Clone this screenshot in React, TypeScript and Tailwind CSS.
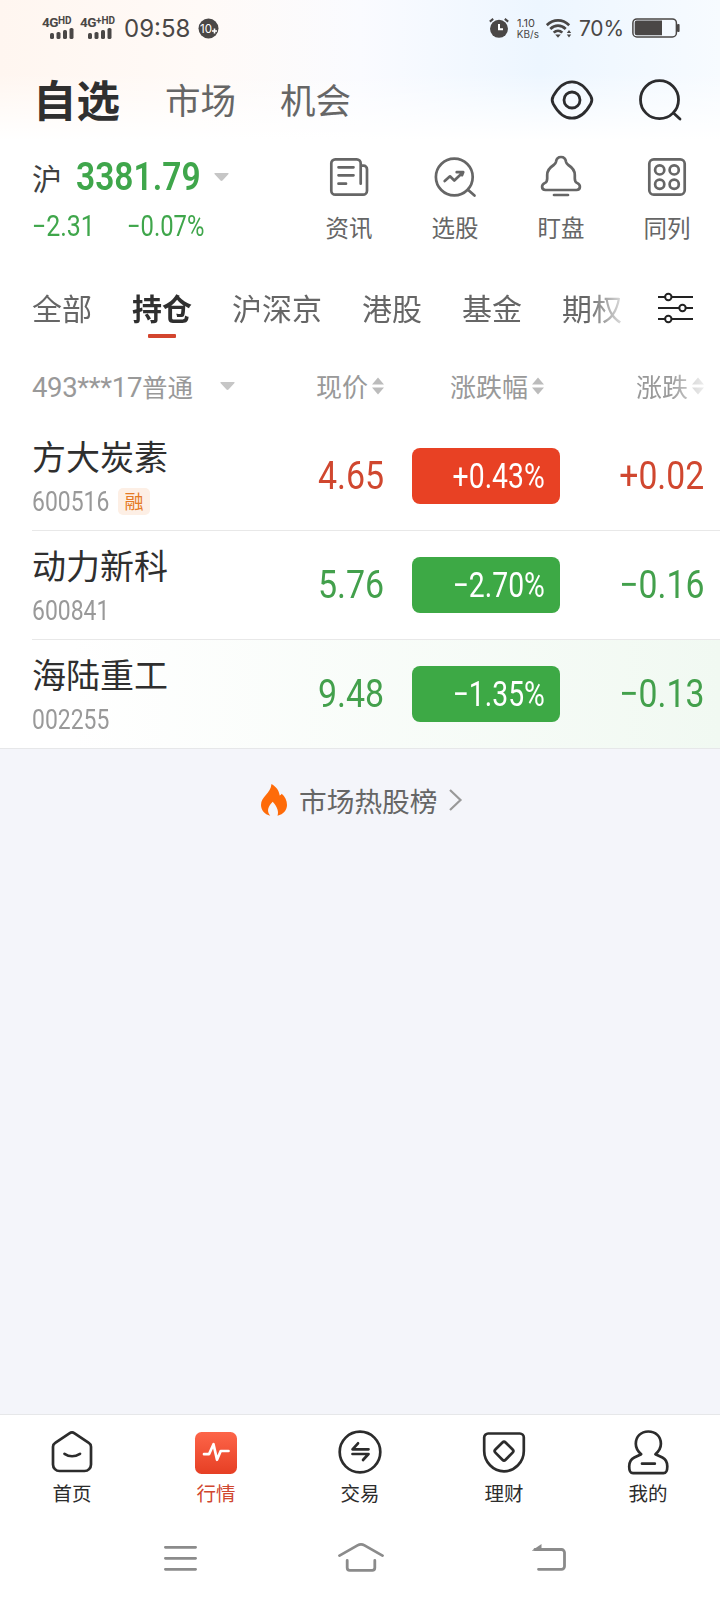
import type { ReactNode } from "react";
import clsx from "clsx";

type Trend = "up" | "down";

interface Stock {
  name: string;
  code: string;
  margin?: boolean;
  price: string;
  percent: string;
  change: string;
  trend: Trend;
}

const stocks: Stock[] = [
  { name: "方大炭素", code: "600516", margin: true, price: "4.65", percent: "+0.43%", change: "+0.02", trend: "up" },
  { name: "动力新科", code: "600841", price: "5.76", percent: "−2.70%", change: "−0.16", trend: "down" },
  { name: "海陆重工", code: "002255", price: "9.48", percent: "−1.35%", change: "−0.13", trend: "down" },
];

const groups = ["全部", "持仓", "沪深京", "港股", "基金", "期权"];

interface IconProps {
  size: number;
  stroke?: number;
  children: ReactNode;
}

function Icon({ size, stroke = 2.4, children }: IconProps) {
  return (
    <svg
      width={size}
      height={size}
      viewBox={`0 0 ${size} ${size}`}
      fill="none"
      stroke="currentColor"
      strokeWidth={stroke}
      strokeLinecap="round"
      strokeLinejoin="round"
      className="shrink-0 overflow-visible"
    >
      {children}
    </svg>
  );
}

// Condensed figures used for every quote
function Num({ className, children }: { className?: string; children: ReactNode }) {
  return (
    <span className={clsx("inline-block whitespace-nowrap font-['Roboto',sans-serif] leading-none", className)}>
      {children}
    </span>
  );
}

function Signal({ label, sup }: { label: string; sup: string }) {
  return (
    <div className="flex flex-col font-['Roboto',sans-serif] font-bold leading-none">
      <div className="flex h-[11px] items-start whitespace-nowrap text-[13.5px] leading-[11px] tracking-[-0.5px]">
        {label}
        <span className="text-[10px] leading-[8px] tracking-[0px]">{sup}</span>
      </div>
      <svg width="24" height="11" viewBox="0 0 24 11" fill="currentColor" className="ml-2">
        <rect x="0" y="5" width="4" height="6" rx="1.6" />
        <rect x="6.5" y="4" width="4" height="7" rx="1.6" />
        <rect x="13" y="2" width="4" height="9" rx="1.6" />
        <rect x="19.5" y="0" width="4" height="11" rx="1.6" />
      </svg>
    </div>
  );
}

function StatusBar() {
  return (
    <div className="flex h-14 items-center justify-between pl-[42px] pr-10 font-['Inter',sans-serif] text-[#4a4746]">
      <div className="flex items-center">
        <div className="w-[38px]"><Signal label="4G" sup="HD" /></div>
        <div className="w-[44px]"><Signal label="4G" sup="+HD" /></div>
        <span className="w-[74px] pt-[1px] text-[24px] leading-none">09:58</span>
        <svg width="21" height="21" viewBox="0 0 21 21">
          <circle cx="10.5" cy="10.5" r="10" fill="#4a4746" />
          <text x="8" y="14.5" fill="#fff" fontSize="11.5" textAnchor="middle" fontFamily="Inter">10</text>
          <path d="M16.500 10.500v5M14 13h5" stroke="#fff" strokeWidth="1.6" />
        </svg>
      </div>
      <div className="flex items-center">
        <svg width="20" height="20" viewBox="0 0 20 20" fill="none" stroke="currentColor" strokeWidth="2">
          <circle cx="10" cy="10.8" r="9" fill="currentColor" stroke="none" />
          <path d="M.8 3.6 4.2.9M19.2 3.6 15.8.9" />
          <path d="M10 6v5.2h4" stroke="#fff" />
        </svg>
        <div className="ml-[2px] flex w-[28px] flex-col items-end gap-[1px] text-[10px] leading-[10px]">
          <div className="pr-[4px] text-[11px]">1.10</div>
          <div>KB/s</div>
        </div>
        <svg width="26" height="19" viewBox="0 0 26 19" fill="none" stroke="currentColor" strokeWidth="2.7" className="ml-[7px]">
          <path d="M.8 6.2C7.5-.2 16.500-.2 23.200 6.200M4.300 10c4.500-4.500 10.900-4.500 15.400 0" />
          <path d="M7.700 13.600c2.600-2.500 6-2.500 8.600 0" />
          <path d="M9.200 15.600h5.600L12 18.700z" fill="currentColor" stroke="none" />
          <path d="m23 11 2.200 3h-4.400zM23 18.600l2.200-3h-4.400z" fill="currentColor" stroke="none" />
        </svg>
        <span className="ml-[7px] w-[53px] pt-[1px] text-[21px] leading-none tracking-[-0.2px]">70%</span>
        <svg width="48" height="20" viewBox="0 0 48 20" fill="none">
          <rect x=".9" y=".9" width="43.500" height="18" rx="4" stroke="currentColor" strokeWidth="1.500" />
          <path d="M2.700 4.500a2 2 0 0 1 2-2H30v14.800H4.700a2 2 0 0 1-2-2z" fill="currentColor" />
          <rect x="45" y="6" width="2.600" height="8" rx="1" fill="currentColor" />
        </svg>
      </div>
    </div>
  );
}

function TitleBar() {
  return (
    <div className="flex h-[90px] items-center pb-1 pl-[33px] pr-[38px] text-[35.500px] leading-none text-[#666]">
      <span className="w-[132px] text-[43.500px] font-bold text-[#2f2f2f]">自选</span>
      <span className="w-[115px]">市场</span>
      <span>机会</span>
      <div className="ml-auto flex gap-[44px] pt-[2px] text-[#2c2c2e]">
        <Icon size={44} stroke={2.800}>
          <path d="M3.200 18.200C8.200 9 14.500 3.800 22 3.800s13.800 5.200 18.800 14.400c1.600 2.900 1.600 4.700 0 7.600C35.800 35 29.500 40.200 22 40.200S8.200 35 3.200 25.800c-1.600-2.900-1.600-4.700 0-7.600Z" />
          <circle cx="22" cy="22" r="8" />
        </Icon>
        <Icon size={44} stroke={2.800}>
          <circle cx="21.500" cy="21.700" r="19" />
          <path d="m35.500 35 6.500 6" />
        </Icon>
      </div>
    </div>
  );
}

function Caret() {
  return (
    <svg width="15" height="9" viewBox="0 0 15 9" fill="#c6c6c6">
      <path d="M1.200 0h12.600c.9 0 1 .7.500 1.200L8.500 7.600c-.600.600-1.400.600-2 0L.700 1.200C.200.700.300 0 1.200 0Z" />
    </svg>
  );
}

const shortcuts: { label: string; icon: ReactNode }[] = [
  {
    label: "资讯",
    icon: (
      <>
        <path d="M31.700 26.700V6.300a4 4 0 0 0-4-4H6.300a4 4 0 0 0-4 4v27.400a4 4 0 0 0 4 4H34a4 4 0 0 0 4-4V12.200a3.500 3.500 0 0 0-3.500-3.500h-2.300" />
        <path d="M9.500 10.300h15M9.500 18.300h15M9.500 26.700H17" />
      </>
    ),
  },
  {
    label: "选股",
    icon: (
      <>
        <circle cx="19.300" cy="20" r="18.400" />
        <path d="m33.200 33 6.300 5.500M9.700 24l5.300-4.700 4.300 4.200 8.200-7.800M21.700 15.200h6.500l-1.200 3" />
      </>
    ),
  },
  {
    label: "盯盘",
    icon: (
      <>
        <path d="M15 4.800C15.500 1.500 17.400 0 20 0s4.500 1.500 5 4.800c.300 1.600 1 2.400 2.300 3.200 4 2.500 6.500 5.500 6.500 10v3.500c0 2.500.700 3.600 2.200 4.400 2.300 1.100 3 2.300 2.900 4-.1 2-1.400 3.100-3.400 3.100h-31c-2 0-3.300-1.100-3.400-3.100-.1-1.700.6-2.900 2.900-4 1.500-.8 2.200-1.900 2.200-4.400V18c0-4.500 2.500-7.500 6.500-10 1.300-.8 2-1.600 2.300-3.200Z" />
        <path d="M13 38h14" />
      </>
    ),
  },
  {
    label: "同列",
    icon: (
      <>
        <rect x="2.300" y="2.300" width="35.400" height="35.400" rx="4.500" />
        <circle cx="12.700" cy="12.900" r="4.600" />
        <circle cx="27.200" cy="12.900" r="4.600" />
        <circle cx="12.700" cy="27.200" r="4.600" />
        <circle cx="27.200" cy="27.200" r="4.600" />
      </>
    ),
  },
];

function IndexPanel() {
  return (
    <section className="flex h-[116px] justify-between pl-8">
      <div className="pt-[12px] text-[#3fa64b]">
        <div className="flex h-[38px] items-center">
          <span className="w-[44px] text-[30px] leading-none text-[#404040]">沪</span>
          <div className="w-[138px]">
            <Num className="origin-left scale-x-[0.85] text-[39.500px] font-semibold">3381.79</Num>
          </div>
          <Caret />
        </div>
        <div className="flex pt-[16px]">
          <div className="w-[95px]"><Num className="origin-left scale-x-[0.86] text-[29px]">−2.31</Num></div>
          <Num className="origin-left scale-x-[0.82] text-[29px]">−0.07%</Num>
        </div>
      </div>
      <div className="flex text-[#666]">
        {shortcuts.map(({ label, icon }) => (
          <div key={label} className="flex w-[106px] flex-col items-center pt-[11px]">
            <Icon size={40} stroke={2.700}>{icon}</Icon>
            <span className="mt-[18px] text-[23.500px] leading-[24px]">{label}</span>
          </div>
        ))}
      </div>
    </section>
  );
}

function GroupTabs() {
  return (
    <div className="flex h-[94px] items-center justify-between pl-8 pr-[27px] text-[30px] leading-none text-[#666]">
      <div className="flex w-[590px] gap-10 overflow-hidden whitespace-nowrap [mask-image:linear-gradient(to_right,#000_555px,transparent_600px)]">
        {groups.map((group) => (
          <div key={group} className="flex h-[60px] shrink-0 flex-col items-center pt-[13px]">
            <span className={clsx(group === "持仓" && "font-bold text-[#2f2f2f]")}>{group}</span>
            {group === "持仓" && <i className="mt-[12px] h-1 w-7 rounded-[1px] bg-[#d3452e]" />}
          </div>
        ))}
      </div>
      <svg width="35" height="34" viewBox="0 0 35 34" fill="#fff" stroke="#222" strokeWidth="2" className="mb-[2px] shrink-0">
        <path d="M0 6h35M0 17h35M0 28h35" />
        <circle cx="10.300" cy="6" r="3.200" />
        <circle cx="24.500" cy="17" r="3.200" />
        <circle cx="10.300" cy="28" r="3.200" />
      </svg>
    </div>
  );
}

function SortLabel({ className, children }: { className?: string; children: ReactNode }) {
  return (
    <div className={clsx("flex items-center justify-end gap-1 whitespace-nowrap", className)}>
      {children}
      <svg width="12" height="18" viewBox="0 0 12 18" fill="#bcbcbc">
        <path d="M6 .5 12 7.500H0zM6 17.500 12 10.500H0z" />
      </svg>
    </div>
  );
}

function ListHeader() {
  return (
    <div className="flex h-[66px] items-center pb-[6px] pl-8 text-[26px] leading-none text-[#999]">
      <span className="w-[188px] whitespace-nowrap pt-[3px] font-['Roboto','Noto_Sans_CJK_SC',sans-serif]">
        <span className="text-[27.500px] tracking-[-0.35px]">493***17</span>
        <span className="text-[25.500px]">普通</span>
      </span>
      <Caret />
      <SortLabel className="w-[149px]">现价</SortLabel>
      <SortLabel className="w-[160px]">涨跌幅</SortLabel>
      <SortLabel className="w-[160px] [mask-image:linear-gradient(to_right,#000_125px,transparent_175px)]">涨跌</SortLabel>
    </div>
  );
}

function StockRow({ stock, last }: { stock: Stock; last: boolean }) {
  const { name, code, margin, price, percent, change, trend } = stock;
  const color = trend === "up" ? "text-[#d0472f]" : "text-[#43a04c]";

  return (
    <div className={clsx(last ? "bg-linear-to-r from-white from-10% to-[#f1f9f2] border-b border-[#e6e7e9]" : "pl-8")}>
      <div className={clsx("flex items-center", last ? "h-[108px] pl-8" : "h-[109px] border-b border-[#e8e8e8]")}>
        <div className="w-[212px]">
          <div className="text-[34px] leading-[36px] text-[#2f2f2f]">{name}</div>
          <div className="mt-[14px] flex h-[27px] items-center text-[#999]">
            <div className="w-[86px] pt-[3px]">
              <Num className="origin-left scale-x-[0.85] text-[27px]">{code}</Num>
            </div>
            {margin && (
              <span className="flex h-[27px] w-8 items-center justify-center rounded-[5px] bg-[#fdefe5] pb-[1px] text-[19px] leading-none text-[#e57a25]">
                融
              </span>
            )}
          </div>
        </div>
        <div className={clsx("w-[140px] text-right", color)}>
          <Num className="origin-right scale-x-[0.87] text-[39px] font-[450]">{price}</Num>
        </div>
        <div
          className={clsx(
            "ml-7 flex h-14 w-[148px] items-center justify-end rounded-lg pr-[15px] text-white",
            trend === "up" ? "bg-[#e84124]" : "bg-[#3da945]",
          )}
        >
          <Num className="origin-right scale-x-[0.81] text-[35px] font-[450]">{percent}</Num>
        </div>
        <div className={clsx("flex-1 pr-[16px] text-right", color)}>
          <Num className="origin-right scale-x-[0.865] text-[39px] font-[450]">{change}</Num>
        </div>
      </div>
    </div>
  );
}

function HotList() {
  return (
    <div className="flex items-center pl-[261px] pt-[34px] text-[27.700px] leading-[34px] text-[#666]">
      <svg width="26" height="32" viewBox="0 0 26 32" fill="#fe6b09">
        <path d="M10.500 0c4.500 2.500 7.600 6.400 8.200 11.500 1-.3 1.700-.9 2-1.800C24 12.500 26 16.500 26 21c0 5-3.500 9.300-9.500 10.800 1.300-3.500.3-8.500-4.800-14C8 21.500 4.800 26.500 9.200 31.700 3.500 30.300 0 26 0 21 0 12.500 9.500 10 10.500 0Z" />
      </svg>
      <span className="ml-3">市场热股榜</span>
      <svg width="14" height="22" viewBox="0 0 14 22" fill="none" stroke="#999" strokeWidth="2.200" className="ml-[12px]">
        <path d="m1 1 10.500 10L1 21" />
      </svg>
    </div>
  );
}

const navItems: { label: string; active?: boolean; icon: ReactNode }[] = [
  {
    label: "首页",
    icon: (
      <>
        <path d="M19.400 3.300 5.200 12.900a4.500 4.500 0 0 0-2.200 3.900v17.700a6.500 6.500 0 0 0 6.500 6.500h25a6.500 6.500 0 0 0 6.500-6.500V16.800a4.500 4.500 0 0 0-2.200-3.900L24.600 3.300a4.500 4.500 0 0 0-5.200 0Z" />
        <path d="M14.500 23.800c4.500 3 10.500 3 15.500 0" />
      </>
    ),
  },
  {
    label: "行情",
    active: true,
    icon: (
      <>
        <defs>
          <linearGradient id="market" x1="0" y1="0" x2="0" y2="1">
            <stop stopColor="#fd6549" />
            <stop offset="1" stopColor="#e63f24" />
          </linearGradient>
        </defs>
        <rect x="1" y="2" width="42" height="42" rx="6.500" fill="url(#market)" stroke="none" />
        <path d="M10 24.200h5l4.500-10 3.500 15.600 3.700-8.800H34.500" stroke="#fff" />
      </>
    ),
  },
  {
    label: "交易",
    icon: (
      <>
        <circle cx="22" cy="22" r="20.300" />
        <path d="M30.500 19.300H14.500l5.500-6M14.500 24H30.500l-5.500 6" />
      </>
    ),
  },
  {
    label: "理财",
    icon: (
      <>
        <path d="M2.200 7.500a4 4 0 0 1 4-4h31.600a4 4 0 0 1 4 4V21c0 11-9 20.300-19.800 20.300S2.200 32 2.200 21Z" />
        <rect x="14.800" y="13.900" width="14.400" height="14.400" rx="2.200" transform="rotate(45 22 21.100)" />
      </>
    ),
  },
  {
    label: "我的",
    icon: (
      <>
        <path d="M15.200 24.200C11.500 21 9.800 17.600 9.800 13.700 9.800 6.500 15 1.500 22.300 1.500s12.600 5 12.600 12.200c0 3.900-1.800 7.300-5.500 10.500l7 3.300c3.600 1.800 4.900 4.600 4.900 9 0 5-1 6.600-3.800 6.600H7c-2.800 0-3.800-1.600-3.800-6.600 0-4.400 1.500-7.200 5.100-9Z" />
        <path d="M16 33.700h12.800" />
      </>
    ),
  },
];

function BottomNav() {
  return (
    <nav className="grid h-[102px] grid-cols-5 border-t border-[#e6e7e9] bg-white pt-[15px] text-[#2c2c2c]">
      {navItems.map(({ label, active, icon }) => (
        <div key={label} className={clsx("flex flex-col items-center", active && "text-[#d0472f]")}>
          <Icon size={44} stroke={2.700}>{icon}</Icon>
          <span className="mt-[9px] text-[19.500px] leading-5">{label}</span>
        </div>
      ))}
    </nav>
  );
}

function SystemNav() {
  return (
    <div className="flex h-[84px] items-start justify-between bg-white pl-[164px] pr-[153px] pt-[26px] text-[#8b8b8b]">
      <svg width="33" height="32" viewBox="0 0 33 32" stroke="currentColor" strokeWidth="2.800" strokeLinecap="round">
        <path d="M1.400 5.300h30.200M1.400 16.300h30.200M1.400 27.300h30.200" />
      </svg>
      <svg width="46" height="32" viewBox="0 0 46 32" fill="none" stroke="currentColor" strokeWidth="2.800" strokeLinecap="round" className="mr-[8px]">
        <path d="M1.500 13.600 19.500 3.400a7 7 0 0 1 7 0L44.500 13.600M9.200 18.500v7.300a2.500 2.500 0 0 0 2.500 2.500h22.600a2.500 2.500 0 0 0 2.500-2.500v-7.300" />
      </svg>
      <svg width="35" height="32" viewBox="0 0 35 32" fill="none" stroke="currentColor" strokeWidth="2.800" strokeLinecap="round">
        <path d="M3 7.500h26.500a3 3 0 0 1 3 3v13.800a3 3 0 0 1-3 3H6.500" />
        <path d="M-.500 8.800 9.500 2v6.800z" fill="currentColor" stroke="none" />
      </svg>
    </div>
  );
}

export default function App() {
  return (
    <div className="flex h-[1600px] w-[720px] flex-col overflow-hidden bg-[#f4f5fa] font-['Noto_Sans_CJK_SC',sans-serif]">
      <div className="bg-white">
        <header className="bg-[linear-gradient(to_bottom,transparent_50%,#fff_96%),linear-gradient(to_right,#fff6f0,#fffaf7_28%,#fafbff_50%,#edf6ff_75%,#f7fbff)]">
          <StatusBar />
          <TitleBar />
        </header>
        <IndexPanel />
        <GroupTabs />
        <ListHeader />
        {stocks.map((stock, i) => (
          <StockRow key={stock.code} stock={stock} last={i === stocks.length - 1} />
        ))}
      </div>
      <main className="flex-1">
        <HotList />
      </main>
      <BottomNav />
      <SystemNav />
    </div>
  );
}
